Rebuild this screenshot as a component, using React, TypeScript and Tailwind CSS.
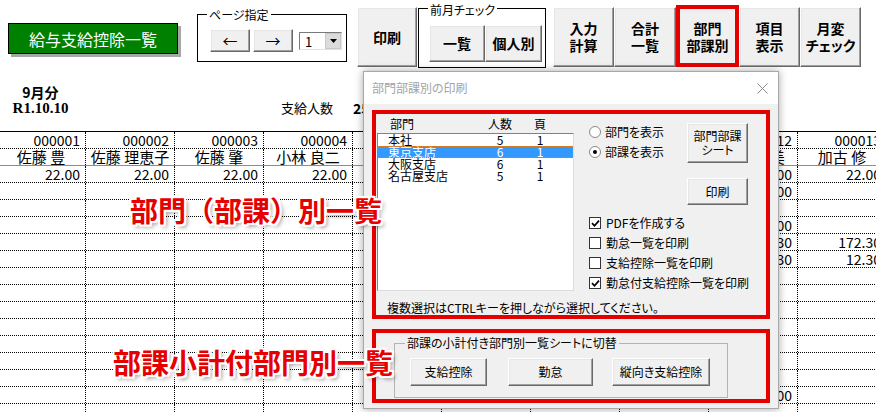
import React from "react";

const btn3d =
  "bg-[#f0f0f0] border border-t-white border-l-white border-r-[#696969] border-b-[#696969] shadow-[inset_-1px_-1px_0_#a0a0a0,inset_1px_1px_0_#e6e6e6]";

const ids = ["000001", "000002", "000003", "000004", "000008", "000009", "000010", "000011", "000012", "000013"];
const names = ["佐藤 豊", "佐藤 理恵子", "佐藤 肇", "小林 良二", "鈴木 一郎", "高橋 健", "伊藤 花子", "渡辺 誠", "田中 直美", "加古 修"];

const rowCount = 15;
const data: Record<string, string> = {
  "0-0": "22.00", "0-1": "22.00", "0-2": "22.00", "0-3": "22.00", "0-4": "22.00", "0-5": "22.00", "0-6": "22.00", "0-7": "22.00", "0-8": "22.00", "0-9": "22.00",
  "1-8": "8.00",
  "3-8": "5.00",
  "4-8": "172.30", "4-9": "172.30",
  "5-8": "12.30", "5-9": "12.30",
  "13-8": "1.00",
};

const outline =
  "[text-shadow:-2px_-2px_0_#fff,0_-2px_0_#fff,2px_-2px_0_#fff,2px_0_0_#fff,2px_2px_0_#fff,0_2px_0_#fff,-2px_2px_0_#fff,-2px_0_0_#fff,3px_3px_4px_rgba(0,0,0,0.45)]";

function Radio({ checked, label }: { checked?: boolean; label: string }) {
  return (
    <div className="h-[20px] flex items-center">
      <span className="w-[12px] h-[12px] rounded-full border border-[#8a8a8a] bg-white flex items-center justify-center">
        {checked && <span className="w-[4px] h-[4px] rounded-full bg-black" />}
      </span>
      <span className="ml-[4px] text-[12px] leading-[14px]">{label}</span>
    </div>
  );
}

function Check({ checked, label }: { checked?: boolean; label: string }) {
  return (
    <div className="h-[20px] flex items-center">
      <span className="w-[12px] h-[12px] border border-[#333] bg-white flex items-center justify-center">
        {checked && (
          <svg width="9" height="9" viewBox="0 0 9 9">
            <path d="M1 4.2 L3.5 6.8 L8 1.6" stroke="#000" strokeWidth="1.7" fill="none" />
          </svg>
        )}
      </span>
      <span className="ml-[5px] text-[12px] leading-[14px]">{label}</span>
    </div>
  );
}

function Sheet() {
  return (
    <div className="-ml-[3px] w-max border-t border-black">
      <div className="flex h-[17px] border-b border-dotted border-black">
        {ids.map((t, i) => (
          <div key={i} className="w-[89px] border-r border-dotted border-black text-right pr-[5px] text-[14px] leading-[16px]">{t}</div>
        ))}
      </div>
      <div className="flex h-[17px] border-b border-solid border-[#8c8c8c]">
        {names.map((t, i) => (
          <div key={i} className="w-[89px] border-r border-dotted border-black text-center text-[15px] leading-[16px] whitespace-nowrap overflow-hidden">{t}</div>
        ))}
      </div>
      {Array.from({ length: rowCount }).map((_, r) => (
        <div key={r} className="flex h-[17px] border-b border-dotted border-black">
          {ids.map((_, c) => (
            <div key={c} className="w-[89px] border-r border-dotted border-black text-right pr-[5px] text-[14px] leading-[16px]">
              {data[`${r}-${c}`] ?? ""}
            </div>
          ))}
        </div>
      ))}
    </div>
  );
}

function Dialog() {
  const items = [
    { n: "本社", c: "5", p: "1" },
    { n: "東京支店", c: "6", p: "1", sel: true },
    { n: "大阪支店", c: "6", p: "1" },
    { n: "名古屋支店", c: "5", p: "1" },
  ];
  return (
    <div className="absolute left-[363px] top-[71px] w-[416px] h-[338px] border border-[#a8a8a8] bg-[#f0f0f0] shadow-[0_0_8px_rgba(0,0,0,0.35)] flex flex-col">
      <div className="h-[32px] shrink-0 bg-white flex items-center justify-between pl-[8px] pr-[10px]">
        <span className="text-[12px] leading-[14px] text-[#a3a3a3]">部門部課別の印刷</span>
        <svg width="11" height="11" viewBox="0 0 11 11">
          <path d="M0.5 0.5 L10.5 10.5 M10.5 0.5 L0.5 10.5" stroke="#8a8a8a" strokeWidth="1" />
        </svg>
      </div>
      <div className="px-[8px] pt-[6px]">
        <div className="h-[209px] border-[4px] border-[#e50000] flex flex-col">
          <div className="flex">
            <div className="ml-[1px] w-[197px]">
              <div className="h-[19px] flex items-center text-[12px] leading-[14px]">
                <span className="w-[103px] pl-[13px]">部門</span>
                <span className="w-[40px] text-center">人数</span>
                <span className="w-[40px] text-center">頁</span>
              </div>
              <div className="h-[158px] bg-white border border-t-[#828282] border-l-[#828282] border-r-[#dcdcdc] border-b-[#dcdcdc]">
                {items.map((it, i) => (
                  <div
                    key={i}
                    className={
                      it.sel
                        ? "h-[12px] flex items-center text-[12px] leading-[12px] bg-[#3399ff] text-white outline-1 outline-dotted outline-[#d9822b] -outline-offset-1"
                        : "h-[12px] flex items-center text-[12px] leading-[12px] text-black"
                    }
                  >
                    <span className="w-[102px] pl-[10px]">{it.n}</span>
                    <span className="w-[40px] text-center">{it.c}</span>
                    <span className="w-[40px] text-center">{it.p}</span>
                  </div>
                ))}
              </div>
            </div>
            <div className="ml-[15px] flex flex-col">
              <div className="flex h-[91px]">
                <div className="w-[98px] pt-[8px]">
                  <Radio label="部門を表示" />
                  <Radio checked label="部課を表示" />
                </div>
                <div className="flex flex-col">
                  <div className={`mt-[9px] w-[61px] h-[40px] ${btn3d} flex flex-col items-center justify-center text-[12px] leading-[14px]`}>
                    <span>部門部課</span>
                    <span>シート</span>
                  </div>
                  <div className={`mt-[15px] w-[61px] h-[27px] ${btn3d} flex items-center justify-center text-[12px] leading-[14px]`}>印刷</div>
                </div>
              </div>
              <div className="mt-[8px]">
                <Check checked label="PDFを作成する" />
                <Check label="勤怠一覧を印刷" />
                <Check label="支給控除一覧を印刷" />
                <Check checked label="勤怠付支給控除一覧を印刷" />
              </div>
            </div>
          </div>
          <div className="mt-[8px] pl-[11px] text-[12px] leading-[14px] whitespace-nowrap">複数選択はCTRLキーを押しながら選択してください。</div>
        </div>
        <div className="mt-[10px] h-[74px] border-[4px] border-[#e50000]">
          <div className="relative ml-[18px] mt-[10px] w-[334px] h-[55px] border border-[#b4b4b4]">
            <span className="absolute left-[10px] -top-[8px] bg-[#f0f0f0] px-[2px] text-[12px] leading-[14px] whitespace-nowrap">部課の小計付き部門別一覧シートに切替</span>
            <div className="flex mt-[14px] ml-[15px]">
              <div className={`w-[77px] h-[28px] ${btn3d} flex items-center justify-center text-[12px] leading-[14px]`}>支給控除</div>
              <div className={`ml-[21px] w-[85px] h-[28px] ${btn3d} flex items-center justify-center text-[12px] leading-[14px]`}>勤怠</div>
              <div className={`ml-[19px] w-[98px] h-[28px] ${btn3d} flex items-center justify-center text-[12px] leading-[14px]`}>縦向き支給控除</div>
            </div>
          </div>
        </div>
      </div>
    </div>
  );
}

function TopBar() {
  const big = ["入力|計算", "合計|一覧", "部門|部課別", "項目|表示", "月変|チェック"];
  const widths = ["w-[61px]", "w-[62px]", "w-[63px]", "w-[61px]", "w-[61px]"];
  return (
    <div className="h-[70px] flex items-start">
      <div className="ml-[8px] mt-[23px] w-[170px] h-[31px] bg-[#008000] border border-black shadow-[3px_3px_0_#a6a6a6] flex items-center justify-center text-white text-[16px] leading-none">
        給与支給控除一覧
      </div>
      <div className="relative ml-[19px] mt-[14px] w-[150px] h-[48px] border border-black">
        <span className="absolute left-[9px] -top-[7px] bg-white px-[2px] text-[12px] leading-[14px]">ページ指定</span>
        <div className="flex items-start mt-[14px] ml-[12px]">
          <div className={`w-[40px] h-[23px] ${btn3d} flex items-center justify-center text-[15px] leading-none`}>←</div>
          <div className={`ml-[3px] w-[40px] h-[23px] ${btn3d} flex items-center justify-center text-[15px] leading-none`}>→</div>
          <div className="ml-[6px] mt-[3px] w-[43px] h-[18px] bg-white border border-t-[#7a7a7a] border-l-[#7a7a7a] border-r-[#e3e3e3] border-b-[#e3e3e3] flex items-center">
            <span className="flex-1 pl-[5px] text-[13px] leading-none">1</span>
            <span className="w-[16px] h-[16px] bg-[#dcdcdc] border border-[#c8c8c8] flex items-center justify-center">
              <svg width="7" height="4" viewBox="0 0 7 4">
                <path d="M0 0 L7 0 L3.5 4 Z" fill="#000" />
              </svg>
            </span>
          </div>
        </div>
      </div>
      <div className={`ml-[10px] mt-[7px] w-[60px] h-[60px] ${btn3d} flex items-center justify-center font-bold text-[14px]`}>印刷</div>
      <div className="relative ml-[1px] mt-[8px] w-[128px] h-[60px] border border-black">
        <span className="absolute left-[9px] -top-[6px] bg-white px-[2px] text-[12px] leading-[14px]">前月チェック</span>
        <div className="flex mt-[16px] ml-[10px]">
          <div className={`w-[56px] h-[37px] ${btn3d} flex items-center justify-center font-bold text-[14px]`}>一覧</div>
          <div className={`w-[57px] h-[37px] ${btn3d} flex items-center justify-center font-bold text-[14px]`}>個人別</div>
        </div>
      </div>
      <div className="ml-[7px] mt-[7px] flex">
        {big.map((t, i) => {
          const [a, b] = t.split("|");
          return (
            <div key={i} className="relative">
              <div className={`${widths[i]} h-[60px] ${btn3d} flex flex-col items-center justify-center font-bold text-[14px] leading-[17px]`}>
                <span>{a}</span>
                <span>{b}</span>
              </div>
              {i === 2 && <div className="absolute left-0 right-0 -top-[2px] bottom-0 border-[4px] border-[#e50000]" />}
            </div>
          );
        })}
      </div>
    </div>
  );
}

export default function App() {
  return (
    <div className="relative w-[876px] h-[412px] overflow-hidden bg-white text-black font-['Noto_Sans_CJK_JP',sans-serif] [font-feature-settings:'palt']">
      <TopBar />
      <div className="h-[61px] flex items-start pt-[15px]">
        <div className="w-[81px] flex flex-col items-center">
          <span className="text-[14px] leading-[14px] font-bold">9月分</span>
          <span className="mt-[2px] text-[15px] leading-[14px] font-bold font-['Liberation_Serif',serif]">R1.10.10</span>
        </div>
        <div className="ml-[200px] mt-[16px] flex items-center">
          <span className="w-[72px] text-[13px] leading-[14px]">支給人数</span>
          <span className="text-[14px] leading-[14px] font-bold">25</span>
        </div>
      </div>
      <Sheet />
      <Dialog />
      <div className={`absolute left-[130px] top-[196px] text-[28px] leading-[28px] font-bold text-[#e60000] whitespace-nowrap [font-feature-settings:normal] ${outline}`}>
        部門（部課）別一覧
      </div>
      <div className={`absolute left-[113px] top-[348px] text-[28px] leading-[28px] font-bold text-[#e60000] whitespace-nowrap [font-feature-settings:normal] ${outline}`}>
        部課小計付部門別一覧
      </div>
    </div>
  );
}
